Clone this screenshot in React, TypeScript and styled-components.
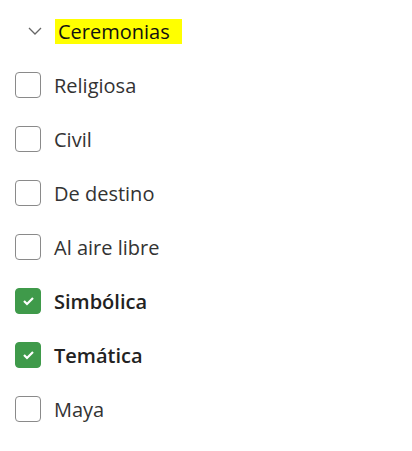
import React, { useState } from 'react';
import styled, { createGlobalStyle } from 'styled-components';

const GlobalStyle = createGlobalStyle`
  body {
    margin: 0;
    background: #fff;
    font-family: "Open Sans", Lato, sans-serif;
  }
`;

const Panel = styled.div`
  padding: 18px 0 0 15px;
`;

const Header = styled.button`
  display: flex;
  align-items: center;
  height: 26px;
  padding: 0;
  border: 0;
  background: none;
  cursor: pointer;
  font: inherit;
`;

const Chevron = styled.span`
  display: flex;
  width: 40px;
  justify-content: center;
  color: #666;
`;

const Title = styled.span`
  display: flex;
  align-items: center;
  height: 25px;
  padding: 0 12px 0 3px;
  background: #ffff00;
  color: #111;
  font-size: 20px;
  font-weight: 500;
`;

const List = styled.ul`
  list-style: none;
  margin: 14px 0 0;
  padding: 0;
`;

const Row = styled.li`
  display: flex;
  align-items: center;
  gap: 13px;
  height: 54px;
  cursor: pointer;
`;

const Box = styled.span<{ $checked: boolean }>`
  display: flex;
  align-items: center;
  justify-content: center;
  box-sizing: border-box;
  width: 26px;
  height: 26px;
  border-radius: 4px;
  border: 1.5px solid ${(p) => (p.$checked ? '#3f9a4a' : '#8a8a8a')};
  background: ${(p) => (p.$checked ? '#3f9a4a' : '#fff')};
`;

const Label = styled.span<{ $checked: boolean }>`
  font-size: 20px;
  color: ${(p) => (p.$checked ? '#222' : '#333')};
  font-weight: ${(p) => (p.$checked ? 600 : 400)};
`;

const options = [
  { id: 1, title: 'Religiosa', checked: false },
  { id: 2, title: 'Civil', checked: false },
  { id: 3, title: 'De destino', checked: false },
  { id: 4, title: 'Al aire libre', checked: false },
  { id: 5, title: 'Simbólica', checked: true },
  { id: 6, title: 'Temática', checked: true },
  { id: 7, title: 'Maya', checked: false },
];

export default function App() {
  const [items, setItems] = useState(options);

  const toggle = (id: number) => {
    setItems(items.map((item) => (item.id === id ? { ...item, checked: !item.checked } : item)));
  };

  return (
    <Panel>
      <GlobalStyle />
      <Header>
        <Chevron>
          <svg width="14" height="8" viewBox="0 0 14 8" fill="none">
            <path d="M1 1l6 6 6-6" stroke="currentColor" strokeWidth="1.3" />
          </svg>
        </Chevron>
        <Title>Ceremonias</Title>
      </Header>
      <List>
        {items.map((item) => (
          <Row key={`ceremonia_${item.id}`} onClick={() => toggle(item.id)}>
            <Box $checked={item.checked}>
              {item.checked && (
                <svg width="13" height="10" viewBox="0 0 13 10" fill="none">
                  <path d="M2 5l3 3 6-6" stroke="#fff" strokeWidth="2.2" />
                </svg>
              )}
            </Box>
            <Label $checked={item.checked}>{item.title}</Label>
          </Row>
        ))}
      </List>
    </Panel>
  );
}
